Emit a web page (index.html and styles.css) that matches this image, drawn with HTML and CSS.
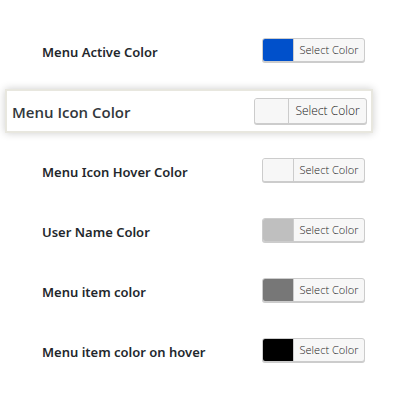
FILE: index.html
```html
<!DOCTYPE html>
<html lang="en">
<head>
<meta charset="utf-8">
<title>Menu colors</title>
<link rel="stylesheet" href="styles.css">
</head>
<body>
<main class="settings">
  <div class="row">
    <span class="label" id="active">Menu Active Color</span>
    <button class="picker" type="button" aria-describedby="active"><span class="swatch blue"></span><span class="text">Select Color</span></button>
  </div>
  <div class="row featured">
    <span class="label" id="icon">Menu Icon Color</span>
    <button class="picker" type="button" aria-describedby="icon"><span class="swatch"></span><span class="text">Select Color</span></button>
  </div>
  <div class="row">
    <span class="label" id="icon-hover">Menu Icon Hover Color</span>
    <button class="picker" type="button" aria-describedby="icon-hover"><span class="swatch"></span><span class="text">Select Color</span></button>
  </div>
  <div class="row">
    <span class="label" id="user">User Name Color</span>
    <button class="picker" type="button" aria-describedby="user"><span class="swatch silver"></span><span class="text">Select Color</span></button>
  </div>
  <div class="row">
    <span class="label" id="item">Menu item color</span>
    <button class="picker" type="button" aria-describedby="item"><span class="swatch gray"></span><span class="text">Select Color</span></button>
  </div>
  <div class="row">
    <span class="label" id="item-hover">Menu item color on hover</span>
    <button class="picker" type="button" aria-describedby="item-hover"><span class="swatch black"></span><span class="text">Select Color</span></button>
  </div>
</main>
</body>
</html>
```
FILE: styles.css
```css
* {
  box-sizing: border-box;
}

body {
  margin: 0;
  background: #fff;
  color: #23282d;
  font-family: "Noto Sans", "Open Sans", sans-serif;
}

.settings {
  padding: 20px 0;
}

.row {
  display: flex;
  align-items: center;
  justify-content: space-between;
  height: 60px;
  padding: 0 41px 0 42px;
}

.label {
  padding-top: 4px;
  font-size: 13px;
  font-weight: 500;
  line-height: 20px;
}

.picker {
  display: flex;
  height: 24px;
  width: 103px;
  padding: 0;
  overflow: hidden;
  border: 1px solid #ccc;
  border-radius: 3px;
  background: #f7f7f7;
  box-shadow: 0 1px 0 #ccc;
  color: #222;
  font-family: "Open Sans", "Noto Sans", sans-serif;
  font-weight: 300;
  font-size: 11px;
  line-height: 22px;
}

.swatch {
  width: 30px;
  height: 100%;
  background: #f7f7f7;
}

.text {
  flex: 1;
  height: 100%;
  border-left: 1px solid #ccc;
  text-align: center;
  white-space: nowrap;
}

.blue {
  background: #0050cb;
}

.silver {
  background: #bfbfbf;
}

.gray {
  background: #777;
}

.black {
  background: #000;
}

.label {
  font-weight: 600;
}

.featured {
  height: 44px;
  margin: 9px 33px 7px 5px;
  padding: 0 4px 0 5px;
  border: 2px solid #e8e7df;
  background: #fff;
  box-shadow: 0 0 8px rgba(0, 0, 0, 0.2);
}

.featured .label {
  padding-top: 2px;
  color: #32373c;
  font-family: "Open Sans", "Noto Sans", sans-serif;
  font-size: 15px;
}

.featured .picker {
  width: 113px;
  height: 26px;
  font-size: 12px;
  line-height: 24px;
}

.featured .swatch {
  width: 33px;
}
```
